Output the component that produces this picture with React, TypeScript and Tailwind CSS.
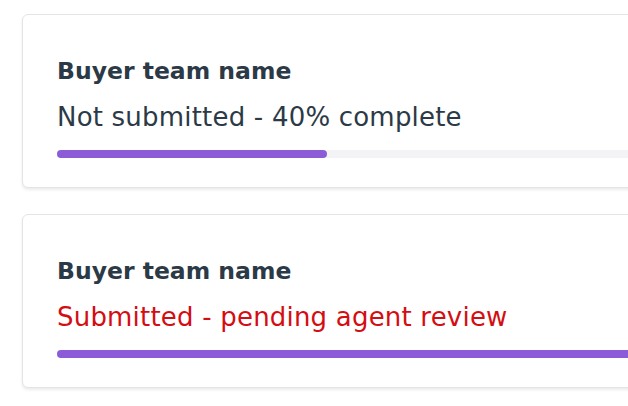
const TEAMS = [
  { name: "Buyer team name", status: "Not submitted - 40% complete", progress: 40, submitted: false },
  { name: "Buyer team name", status: "Submitted - pending agent review", progress: 100, submitted: true },
];

export default function App() {
  return (
    <div
      className="h-[406px] w-[628px] overflow-hidden bg-white"
      style={{ fontFamily: '"DejaVu Sans", "Open Sans", sans-serif' }}
    >
      <div className="flex w-[760px] flex-col gap-[26px] pl-[22px] pt-[14px]">
        {TEAMS.map((t, i) => (
          <div
            key={i}
            className="h-[174px] rounded-[6px] border border-[#e4e4e6] bg-white px-[34px] pt-[40px] shadow-[0_2px_3px_rgba(0,0,0,0.08)]"
          >
            <h3 className="text-[23.5px] leading-[32px] font-bold text-[#2b3a46]">{t.name}</h3>
            <p
              className={
                t.submitted
                  ? "mt-[14px] text-[26px] leading-[32px] tracking-[0.2px] text-[#d40d12]"
                  : "mt-[14px] text-[26px] leading-[32px] tracking-[0.2px] text-[#2b3a46]"
              }
            >
              {t.status}
            </p>
            <div className="mt-[17px] h-[8px] w-full rounded-full bg-[#f3f3f5]">
              <div
                className="h-full rounded-full bg-[#8b5bd8]"
                style={{ width: t.submitted ? "100%" : "270px" }}
              />
            </div>
          </div>
        ))}
      </div>
    </div>
  );
}
